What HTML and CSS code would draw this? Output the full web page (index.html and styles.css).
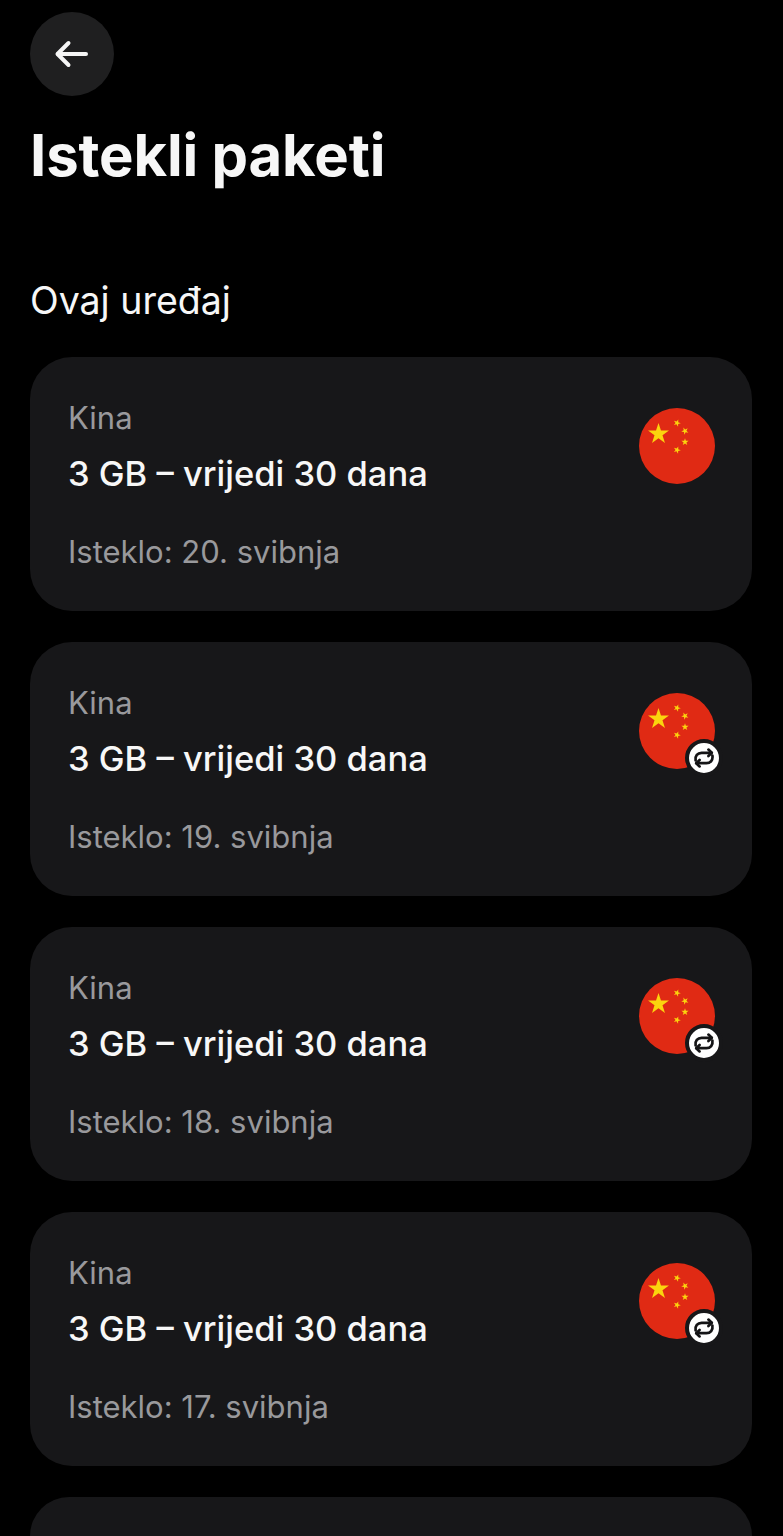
FILE: index.html
```html
<!DOCTYPE html>
<html>
<head>
<title>Istekli paketi</title>
<link rel="stylesheet" href="styles.css">
</head>
<body>

<svg class="defs" width="0" height="0">
  <defs>
    <polygon id="star" points="0,-1 0.225,-0.309 0.951,-0.309 0.363,0.118 0.588,0.809 0,0.382 -0.588,0.809 -0.363,0.118 -0.951,-0.309 -0.225,-0.309"/>
    <g id="flag">
      <circle cx="38" cy="38" r="38" fill="#e02a14"/>
      <use href="#star" transform="translate(19.5 26) scale(11)" fill="#fbd40e"/>
      <use href="#star" transform="translate(38 15) scale(3.8) rotate(20)" fill="#fbd40e"/>
      <use href="#star" transform="translate(46 23) scale(3.8) rotate(45)" fill="#fbd40e"/>
      <use href="#star" transform="translate(46 34) scale(3.8) rotate(0)" fill="#fbd40e"/>
      <use href="#star" transform="translate(38 42) scale(3.8) rotate(20)" fill="#fbd40e"/>
    </g>
    <g id="renew" fill="none" stroke="#141416" stroke-width="2.7" stroke-linecap="round" stroke-linejoin="round">
      <path d="M3.6 14.5 C2.8 10 5.6 6.8 9.6 6.8 H19.5"/>
      <path d="M16.4 3.6 L19.8 6.8 L16.4 10"/>
      <path d="M20.4 9.5 C21.2 14 18.4 17.2 14.4 17.2 H4.5"/>
      <path d="M7.6 14 L4.2 17.2 L7.6 20.4"/>
    </g>
  </defs>
</svg>

<div id="container">
  <button class="back-btn">
    <svg width="36" height="36" viewBox="0 0 36 36" fill="none" stroke="#f5f5f5" stroke-width="4" stroke-linecap="round" stroke-linejoin="round">
      <path d="M4 18 H32"/>
      <path d="M14.5 7 L3.5 18 L14.5 29"/>
    </svg>
  </button>

  <h1>Istekli paketi</h1>
  <h2>Ovaj uređaj</h2>

  <div class="plan-list">
    <div class="plan-card">
      <div class="plan-text">
        <div class="plan-country">Kina</div>
        <div class="plan-name">3 GB – vrijedi 30 dana</div>
        <div class="plan-date">Isteklo: 20. svibnja</div>
      </div>
      <div class="plan-flag">
        <svg width="76" height="76" viewBox="0 0 76 76"><use href="#flag"/></svg>
      </div>
    </div>

    <div class="plan-card">
      <div class="plan-text">
        <div class="plan-country">Kina</div>
        <div class="plan-name">3 GB – vrijedi 30 dana</div>
        <div class="plan-date">Isteklo: 19. svibnja</div>
      </div>
      <div class="plan-flag">
        <svg width="76" height="76" viewBox="0 0 76 76"><use href="#flag"/></svg>
        <span class="renew-badge"><svg width="24" height="24" viewBox="0 0 24 24"><use href="#renew"/></svg></span>
      </div>
    </div>

    <div class="plan-card">
      <div class="plan-text">
        <div class="plan-country">Kina</div>
        <div class="plan-name">3 GB – vrijedi 30 dana</div>
        <div class="plan-date">Isteklo: 18. svibnja</div>
      </div>
      <div class="plan-flag">
        <svg width="76" height="76" viewBox="0 0 76 76"><use href="#flag"/></svg>
        <span class="renew-badge"><svg width="24" height="24" viewBox="0 0 24 24"><use href="#renew"/></svg></span>
      </div>
    </div>

    <div class="plan-card">
      <div class="plan-text">
        <div class="plan-country">Kina</div>
        <div class="plan-name">3 GB – vrijedi 30 dana</div>
        <div class="plan-date">Isteklo: 17. svibnja</div>
      </div>
      <div class="plan-flag">
        <svg width="76" height="76" viewBox="0 0 76 76"><use href="#flag"/></svg>
        <span class="renew-badge"><svg width="24" height="24" viewBox="0 0 24 24"><use href="#renew"/></svg></span>
      </div>
    </div>

    <div class="plan-card plan-card-cut"></div>
  </div>
</div>

</body>
</html>
```

FILE: styles.css
```css
html, body {
  height: 1536px;
  overflow: hidden;
}

body {
  font-family: 'Inter', sans-serif;
  background-color: #000;
  color: #f7f7f7;
  margin: 0;
}

.defs {
  display: block;
  height: 0;
}

#container {
  padding: 12px 31px 0 30px;
}

.back-btn {
  display: flex;
  align-items: center;
  justify-content: center;
  width: 84px;
  height: 84px;
  padding: 0;
  border: none;
  border-radius: 50%;
  background-color: #1f1f20;
}

h1 {
  font-size: 58px;
  font-weight: 700;
  line-height: 68px;
  margin: 25px 0 0 0;
  letter-spacing: -0.15px;
}

h2 {
  font-size: 37.5px;
  font-weight: 400;
  line-height: 44px;
  margin: 90px 0 0 0;
}

.plan-list {
  display: flex;
  flex-direction: column;
  gap: 31px;
  margin-top: 34px;
}

.plan-card {
  display: flex;
  justify-content: space-between;
  align-items: flex-start;
  height: 254px;
  box-sizing: border-box;
  padding: 41px 37px 0 38px;
  border-radius: 42px;
  background-color: #171719;
}

.plan-card-cut {
  height: 39px;
  padding: 0;
  border-radius: 42px 42px 0 0;
}

.plan-country {
  font-size: 31px;
  line-height: 40px;
  color: #99999c;
}

.plan-name {
  font-size: 34.5px;
  font-weight: 500;
  line-height: 44px;
  margin-top: 14px;
}

.plan-date {
  font-size: 31px;
  line-height: 40px;
  color: #99999c;
  margin-top: 36px;
}

.plan-flag {
  position: relative;
  width: 76px;
  height: 76px;
  margin-top: 10px;
}

.plan-flag > svg {
  display: block;
}

.renew-badge {
  position: absolute;
  left: 46px;
  top: 46px;
  display: flex;
  align-items: center;
  justify-content: center;
  width: 30px;
  height: 30px;
  border: 4px solid #171719;
  border-radius: 50%;
  background-color: #fff;
}
```
